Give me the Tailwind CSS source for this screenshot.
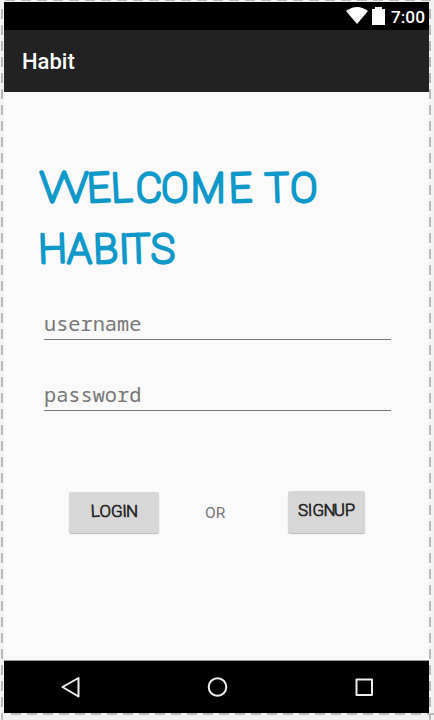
<!DOCTYPE html>
<html lang="en">
<head>
<meta charset="utf-8">
<title>Habit</title>
<script src="https://cdn.jsdelivr.net/npm/@tailwindcss/browser@4"></script>
</head>
<body class="relative w-[434px] h-[720px] overflow-hidden bg-[#f2f2f2] pt-[2px] pl-1">
<main class="w-[425px] h-[711px] flex flex-col bg-[#fafafa]">
  <div class="h-7 shrink-0 bg-black flex items-center justify-end pr-1">
    <svg class="w-[22px] h-[18px] mr-[4px]" viewBox="0 0 22 18" fill="#fff"><path d="M0 4Q11-4 22 4L11 17Z"/></svg>
    <svg class="w-[13px] h-[18px] mr-[6px]" viewBox="0 0 13 18" fill="#fff"><path d="M0 2h3V0h7v2h3v16H0Z"/></svg>
    <span class="text-[17.3px] leading-[30px] pt-px text-white font-medium font-[Roboto,sans-serif]">7:00</span>
  </div>
  <header class="h-[62px] shrink-0 bg-[#222] flex items-center pl-[18px] text-white text-[22px] font-medium font-[Roboto,sans-serif]">Habit</header>
  <section class="flex-1 flex flex-col">
    <svg class="mt-[68px] ml-[26px] w-[310px] h-[120px] shrink-0" viewBox="30 160 310 120" fill="#0f98ca" stroke="#0f98ca" stroke-width="3.3" stroke-linejoin="round" font-family="Roboto, sans-serif" font-weight="100" font-size="40">
      <text y="202" x="39.500 88 112 136 161.500 191 229.500 250 265.500 290.500" rotate="0 -3 -3 0 0 0 -2 0 -2 0"><tspan font-family="Lato, sans-serif" font-size="41" textLength="49" lengthAdjust="spacingAndGlyphs">W</tspan>ELCOME TO</text>
      <text y="263" x="39 67.500 94 119.500 127 151" rotate="-2 0 -2 -2 -2 0">HABITS</text>
    </svg>
    <div class="mt-[24px] ml-10 w-[347px] h-[36px] border-b border-[#777] text-[#777] text-[20.3px] leading-[39px] font-['Noto_Sans_Mono','DejaVu_Sans_Mono',monospace]">username</div>
    <div class="mt-[35px] ml-10 w-[347px] h-[36px] border-b border-[#777] text-[#777] text-[20.3px] leading-[39px] font-['Noto_Sans_Mono','DejaVu_Sans_Mono',monospace]">password</div>
    <div class="mt-[79px] ml-[65px] w-[296px] h-[43px] flex items-end">
      <button class="w-[90px] h-[41px] rounded-[2px] bg-[#d7d7d7] shadow-[0_1px_1px_#bbb]"><svg class="block w-[90px] h-[41px]" viewBox="69 492 90 41" fill="#222" stroke="#222" stroke-width=".7" stroke-linejoin="round" font-family="Roboto, sans-serif" font-weight="300" font-size="17"><text x="91 99.500 111 122.500 126" y="517" rotate="-3 0 0 -2 0">LOGIN</text></svg></button>
      <span class="ml-[46px] w-[83px] text-[#777] text-[15.5px] leading-[39px] font-[Roboto,sans-serif]">OR</span>
      <button class="w-[77px] h-[42px] rounded-[2px] bg-[#d7d7d7] shadow-[0_1px_1px_#bbb]"><svg class="block w-[77px] h-[42px]" viewBox="288 491 77 42" fill="#222" stroke="#222" stroke-width=".7" stroke-linejoin="round" font-family="Roboto, sans-serif" font-weight="300" font-size="17"><text x="298 308 312.500 323.500 334 345" y="516" rotate="0 -2 0 0 -2 -2">SIGNUP</text></svg></button>
    </div>
  </section>
  <nav class="h-[53px] shrink-0 bg-black border-t border-[#999]">
    <svg class="block w-[425px] h-[52px]" viewBox="4 661 425 52" fill="none" stroke="#eee" stroke-width="2" stroke-linejoin="round"><path d="M62.5 687L78.5 678V696.500Z"/><circle cx="217.500" cy="687" r="8.800"/><path d="M356.500 679.500h15.500v15.500h-15.500Z"/></svg>
  </nav>
</main>
<svg class="absolute inset-0 w-[434px] h-[720px]" viewBox="0 0 434 720" fill="none" stroke="#bbb" stroke-width="2" stroke-dasharray="10 6"><path d="M2 9V720M430 9V720M11 714H434M5 0H434"/></svg>
</body>
</html>
